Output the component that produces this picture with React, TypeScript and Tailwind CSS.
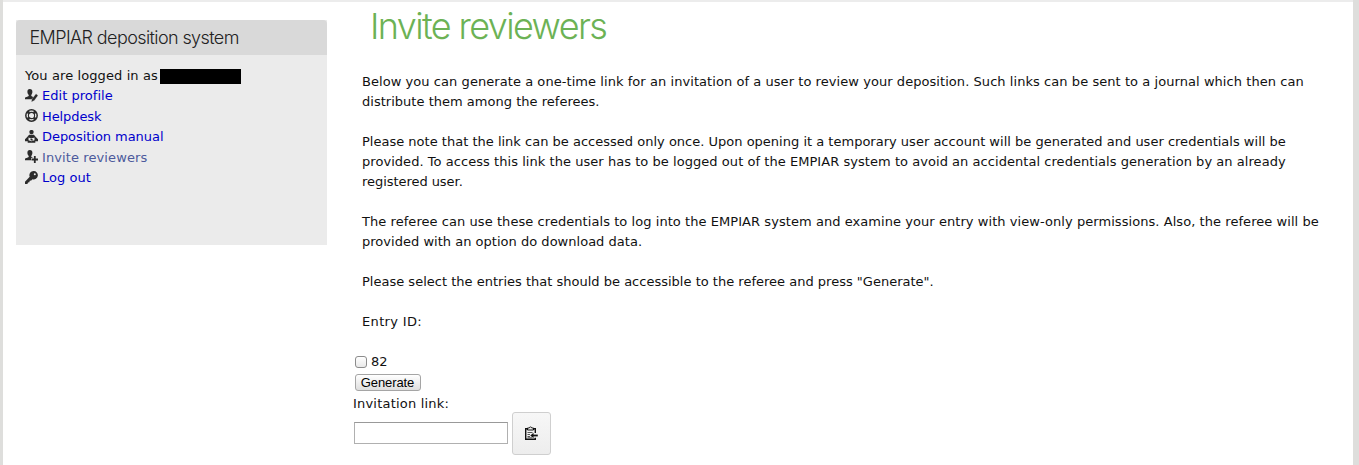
import React from 'react';

type IconProps = { children: React.ReactNode };

function Icon({ children }: IconProps) {
  return (
    <svg width="13" height="13" viewBox="0 0 13 13" fill="#2b2b2b" className="mr-1 block shrink-0 -translate-y-px">
      {children}
    </svg>
  );
}

const person = (
  <path d="M4.8 0C6.6 0 7.5 1.3 7.4 3C7.3 4.5 6.7 5.3 6.3 5.9V7.1L8.5 8.2L7.2 10.2H0V9C0 8.2 2.9 7.8 3.7 7.1V5.9C3 5.2 2.5 4.4 2.4 3C2.3 1.2 3.2 0 4.8 0Z" />
);

const icons = {
  edit: (
    <>
      {person}
      <path d="M11 4.8L13 6.6L9.3 11.6L6.4 12.9L6.9 9.9Z" stroke="#ebebeb" strokeWidth="0.3" />
    </>
  ),
  help: (
    <>
      <circle cx="6.5" cy="6.5" r="5.7" fill="none" stroke="#2b2b2b" strokeWidth="1.5" />
      <circle cx="6.5" cy="6.5" r="3.1" fill="none" stroke="#2b2b2b" strokeWidth="1.1" />
      <path d="M2.2 2.2L4.2 4.2M10.8 2.2L8.8 4.2M2.2 10.8L4.2 8.8M10.8 10.8L8.8 8.8" stroke="#2b2b2b" strokeWidth="2.8" />
    </>
  ),
  manual: (
    <>
      <circle cx="6.5" cy="2.1" r="2.2" />
      <path d="M4.1 4.8H8.9L11 7.2L13 9.3V11.2H10.3V12.8H2.7V11.2H0V9.3L2 7.2Z" />
      <path d="M3.5 7.4L5 7.9H8L9.5 7.4V10.2L6.5 11.2L3.5 10.2Z" fill="#ebebeb" />
      <path d="M5.4 8.6H7.2V9.4H8V10.6H5.8V9.8H5.4Z" />
    </>
  ),
  invite: (
    <>
      {person}
      <path d="M9.8 5.3V13M6 9.5H13" stroke="#ebebeb" strokeWidth="3" />
      <path d="M9.8 6V13M6.5 9.5H13" stroke="#2b2b2b" strokeWidth="1.8" />
    </>
  ),
  key: (
    <path fillRule="evenodd" d="M8.6 0A4.2 4.2 0 0 0 4.7 5.8L0 10.7V13H2.4L3 11.5L4.4 11.2L4.7 9.7L6.3 9.4L7.4 8.2A4.2 4.2 0 1 0 8.6 0ZM9.8 2.2A1 1 0 1 1 9.8 4.2A1 1 0 0 1 9.8 2.2Z" />
  ),
};

const links = [
  { icon: icons.edit, label: 'Edit profile', style: 'text-[#0000cc] tracking-[0.03px]' },
  { icon: icons.help, label: 'Helpdesk', style: 'text-[#0000cc] tracking-[-0.1px]' },
  { icon: icons.manual, label: 'Deposition manual', style: 'text-[#0000cc] tracking-[-0.05px]' },
  { icon: icons.invite, label: 'Invite reviewers', style: 'text-[#4c5a9c] tracking-[0.1px]' },
  { icon: icons.key, label: 'Log out', style: 'text-[#0000cc] tracking-[0.05px]' },
];

const paragraphs = [
  [
    {
      text: 'Below you can generate a one-time link for an invitation of a user to review your deposition. Such links can be sent to a journal which then can',
      tracking: 'tracking-[0.06px]',
    },
    { text: 'distribute them among the referees.', tracking: 'tracking-[0.02px]' },
  ],
  [
    {
      text: 'Please note that the link can be accessed only once. Upon opening it a temporary user account will be generated and user credentials will be',
      tracking: 'tracking-[0.007px]',
    },
    {
      text: 'provided. To access this link the user has to be logged out of the EMPIAR system to avoid an accidental credentials generation by an already',
      tracking: 'tracking-[0.048px]',
    },
    { text: 'registered user.', tracking: 'tracking-[-0.05px]' },
  ],
  [
    {
      text: 'The referee can use these credentials to log into the EMPIAR system and examine your entry with view-only permissions. Also, the referee will be',
      tracking: 'tracking-[0.06px]',
    },
    { text: 'provided with an option do download data.', tracking: 'tracking-[0.02px]' },
  ],
  [
    {
      text: 'Please select the entries that should be accessible to the referee and press "Generate".',
      tracking: 'tracking-[0.007px]',
    },
  ],
  [{ text: 'Entry ID:', tracking: 'tracking-[0.35px]' }],
];

export default function App() {
  return (
    <div className="h-[465px] overflow-hidden bg-[#dededc] pr-[6px] pl-[3px] font-['DejaVu_Sans',sans-serif] text-[13px] leading-5 text-[#111]">
      <div className="flex h-full border-t-2 border-[#ececec] bg-white pl-[13px]">
        <aside className="mt-[18px] h-[225px] w-[311px] shrink-0 bg-[#ebebeb]">
          <h2 className="flex h-[35px] items-center rounded-t-[4px] bg-[#d9d9d9] pt-px pl-[13.5px] font-['Inter',sans-serif] text-[18px] font-light tracking-[-0.6px] whitespace-nowrap text-[#222]">
            EMPIAR deposition system
          </h2>
          <div className="pt-[11px] pl-[9px]">
            <div className="flex h-5 items-center whitespace-nowrap">
              <span className="tracking-[0.1px]">You are logged in as</span>
              <span className="ml-[2px] h-[15px] w-[81px] bg-black" />
            </div>
            <ul>
              {links.map(({ icon, label, style }) => (
                <li key={label} className="flex h-[20.5px] items-center whitespace-nowrap">
                  <Icon>{icon}</Icon>
                  <a href="#" className={style}>{label}</a>
                </li>
              ))}
            </ul>
          </div>
        </aside>
        <main className="ml-[26px] min-w-0 flex-1">
          <h1 className="ml-[17px] h-[70px] pt-[2px] font-['Inter',sans-serif] text-[36px] leading-[44px] font-light tracking-[-1.62px] whitespace-nowrap text-[#6cb255]">
            Invite reviewers
          </h1>
          <div className="ml-[9px] flex flex-col gap-5">
            {paragraphs.map((lines) => (
              <p key={lines[0].text}>
                {lines.map(({ text, tracking }) => (
                  <span key={text} className="block whitespace-nowrap">
                    <span className={tracking}>{text}</span>
                  </span>
                ))}
              </p>
            ))}
          </div>
          <form className="mt-5">
            <label className="ml-[2px] flex h-5 items-center">
              <input
                type="checkbox"
                className="mr-1 size-3 appearance-none rounded-[3px] border border-[#8c8c8c] bg-linear-to-b from-white to-[#e9e9e9]"
              />
              82
            </label>
            <button
              type="button"
              className="mt-[2px] ml-[2px] flex h-[17px] w-[66px] items-center justify-center rounded-[3px] border border-[#a5a5a5] bg-linear-to-b from-white to-[#dedede] pr-px font-['Liberation_Sans',sans-serif] text-[13px] leading-none tracking-[-0.1px] text-black"
            >
              Generate
            </button>
            <label className="mt-[3px] block h-[18px] tracking-[0.2px]">Invitation link:</label>
            <div className="flex items-center">
              <input type="text" className="mb-[2px] ml-[1px] h-[22px] w-[154px] border border-[#b0b0b0] border-t-[#999] bg-white" />
              <button
                type="button"
                className="ml-1 flex h-[43px] w-[39px] items-center justify-center rounded-[3px] border border-[#cfcfcf] bg-linear-to-b from-[#f7f7f7] to-[#ededed] pr-px"
              >
                <svg width="14" height="15" viewBox="0 0 14 15" fill="none" stroke="#111" strokeWidth="1.4">
                  <path d="M11.3 7V2.7H1.7V13.3H11.3V11.8" />
                  <path d="M3.5 4V2H5.2L6.5.7L7.8 2H9.5V4Z" fill="#eee" strokeWidth="1" />
                  <path d="M3.5 6.5H8.5M3.5 8.5H6M3.5 10.5H6M3.5 11.8H8" stroke="#555" strokeWidth="1" />
                  <path d="M13.8 9.5H8" strokeWidth="1.8" />
                  <path d="M6.3 9.5L9.5 6.8V12.2Z" fill="#111" stroke="none" />
                </svg>
              </button>
            </div>
          </form>
        </main>
      </div>
    </div>
  );
}
